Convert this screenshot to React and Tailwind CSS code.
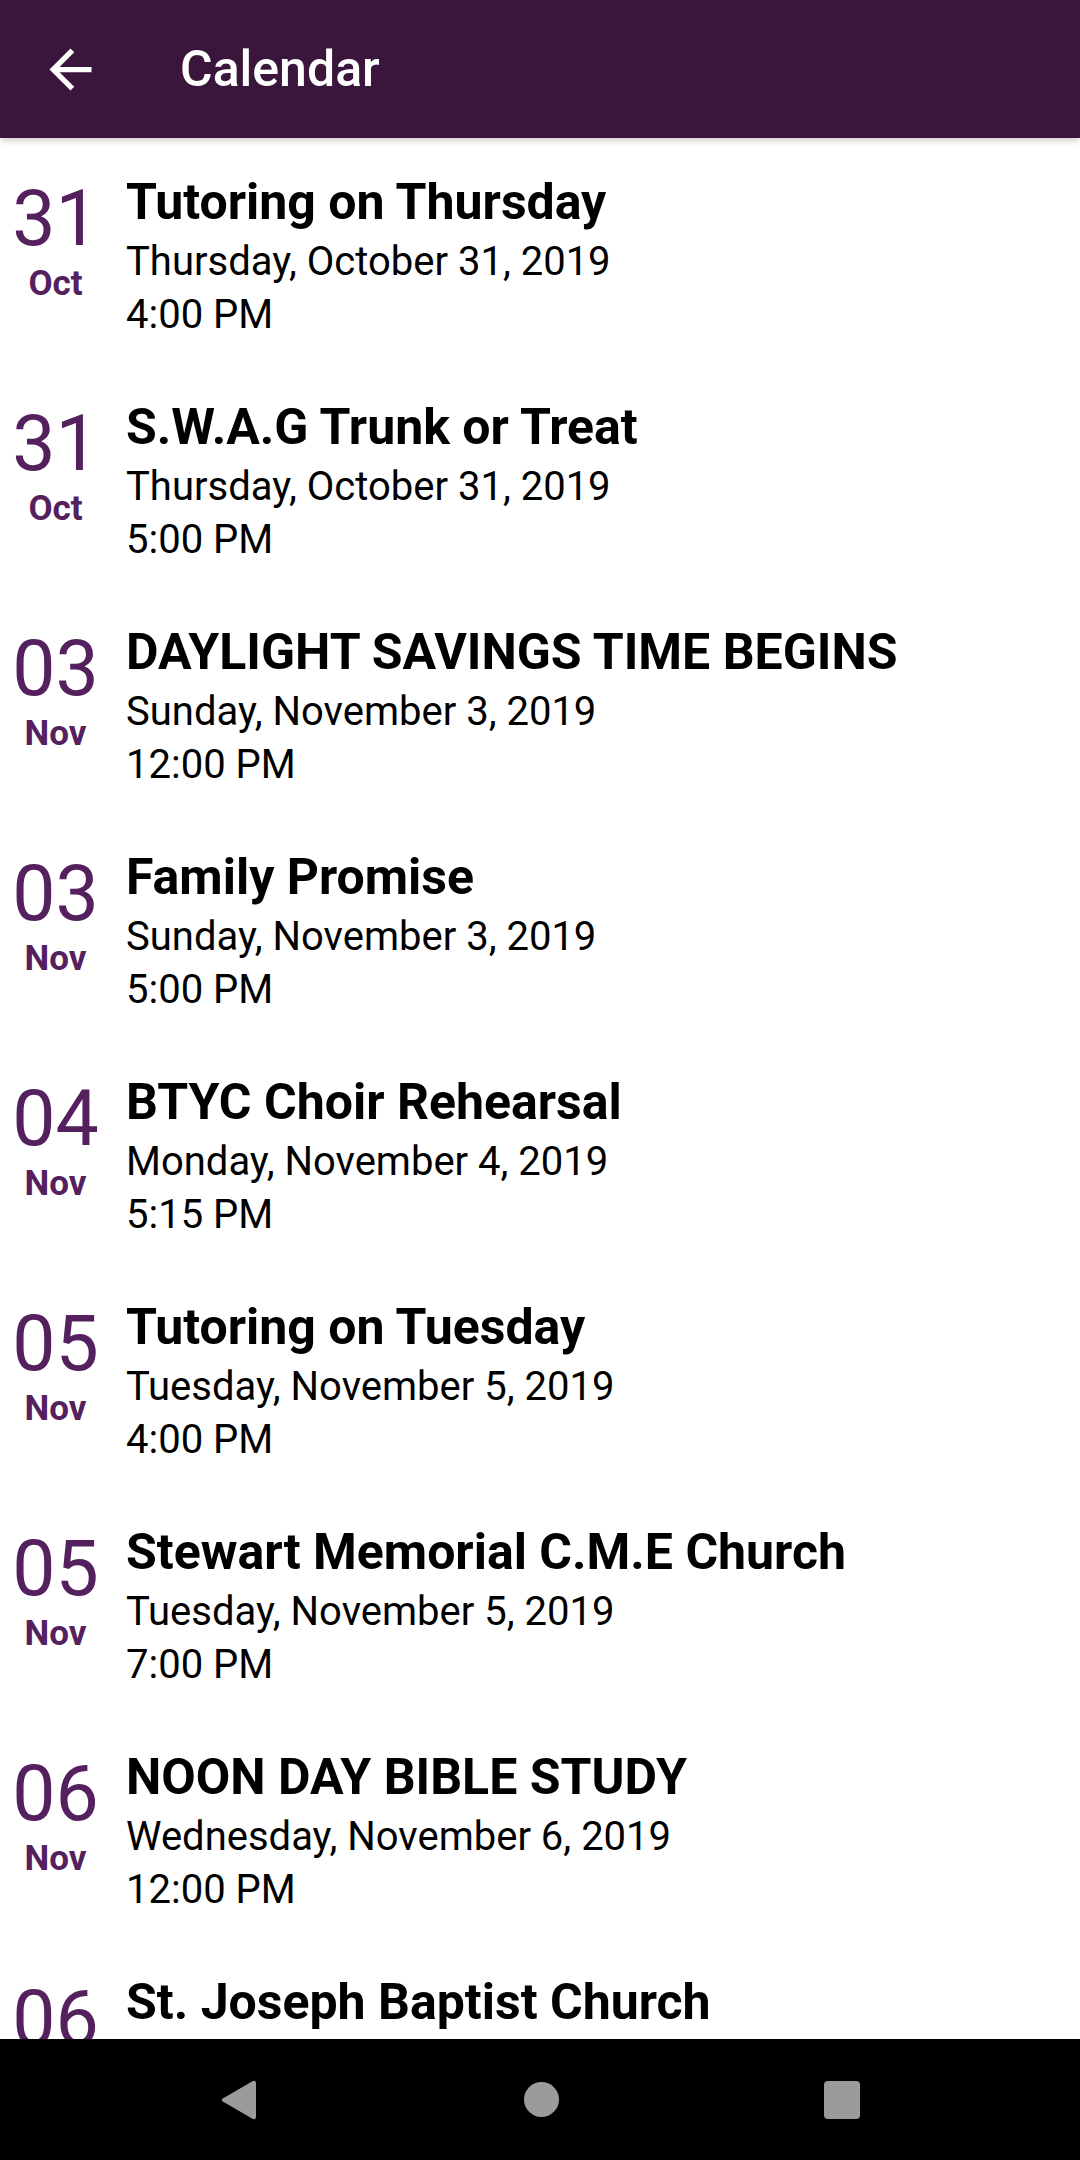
import React from "react";

const events = [
  { d: "31", m: "Oct", t: "Tutoring on Thursday", date: "Thursday, October 31, 2019", time: "4:00 PM" },
  { d: "31", m: "Oct", t: "S.W.A.G Trunk or Treat", date: "Thursday, October 31, 2019", time: "5:00 PM" },
  { d: "03", m: "Nov", t: "DAYLIGHT SAVINGS TIME BEGINS", date: "Sunday, November 3, 2019", time: "12:00 PM" },
  { d: "03", m: "Nov", t: "Family Promise", date: "Sunday, November 3, 2019", time: "5:00 PM" },
  { d: "04", m: "Nov", t: "BTYC Choir Rehearsal", date: "Monday, November 4, 2019", time: "5:15 PM" },
  { d: "05", m: "Nov", t: "Tutoring on Tuesday", date: "Tuesday, November 5, 2019", time: "4:00 PM" },
  { d: "05", m: "Nov", t: "Stewart Memorial C.M.E Church", date: "Tuesday, November 5, 2019", time: "7:00 PM" },
  { d: "06", m: "Nov", t: "NOON DAY BIBLE STUDY", date: "Wednesday, November 6, 2019", time: "12:00 PM" },
  { d: "06", m: "Nov", t: "St. Joseph Baptist Church", date: "Wednesday, November 6, 2019", time: "6:00 PM" },
];

function Row({ e }) {
  return (
    <div className="flex h-[225px] shrink-0">
      <div className="w-[111px] shrink-0 flex flex-col items-center text-[#54205e]">
        <div className="text-[77px] leading-[90px] font-normal">{e.d}</div>
        <div className="text-[35px] leading-[39px] font-bold">{e.m}</div>
      </div>
      <div className="ml-[15px] flex flex-col text-black">
        <div className="text-[50px] leading-[56px] font-bold mb-[5px] whitespace-nowrap">{e.t}</div>
        <div className="text-[40px] leading-[53px] whitespace-nowrap">{e.date}</div>
        <div className="text-[40px] leading-[53px] whitespace-nowrap">{e.time}</div>
      </div>
    </div>
  );
}

export default function App() {
  return (
    <div
      className="w-[1080px] h-[2160px] flex flex-col bg-white overflow-hidden"
      style={{ fontFamily: "Roboto, 'Noto Sans', sans-serif" }}
    >
      <header className="relative z-10 h-[138px] shrink-0 bg-[#3b163c] flex items-center shadow-[0_3px_6px_rgba(0,0,0,0.18)]">
        <svg className="ml-[39px] w-[63px] h-[63px]" viewBox="0 0 24 24" fill="#ffffff">
          <path d="M20 11H7.83l5.59-5.59L12 4l-8 8 8 8 1.41-1.41L7.83 13H20v-2z" />
        </svg>
        <div className="ml-[78px] text-white text-[50px] font-medium leading-none">Calendar</div>
      </header>
      <main className="flex-1 overflow-hidden pt-[36px] flex flex-col">
        {events.map((e, i) => (
          <Row key={i} e={e} />
        ))}
      </main>
      <nav className="h-[121px] shrink-0 bg-black flex items-center justify-center gap-[265px]">
        <svg width="35" height="40" viewBox="0 0 35 40" className="mr-[3px]">
          <path d="M2.2 18.2 L31 1.4 Q35 -0.8 35 3.8 V36.2 Q35 40.8 31 38.6 L2.2 21.8 Q-0.7 20 2.2 18.2Z" fill="#9b9b9b" />
        </svg>
        <div className="w-[35px] h-[35px] rounded-full bg-[#9b9b9b]" />
        <div className="w-[36px] h-[38px] rounded-[4px] bg-[#9b9b9b]" />
      </nav>
    </div>
  );
}
